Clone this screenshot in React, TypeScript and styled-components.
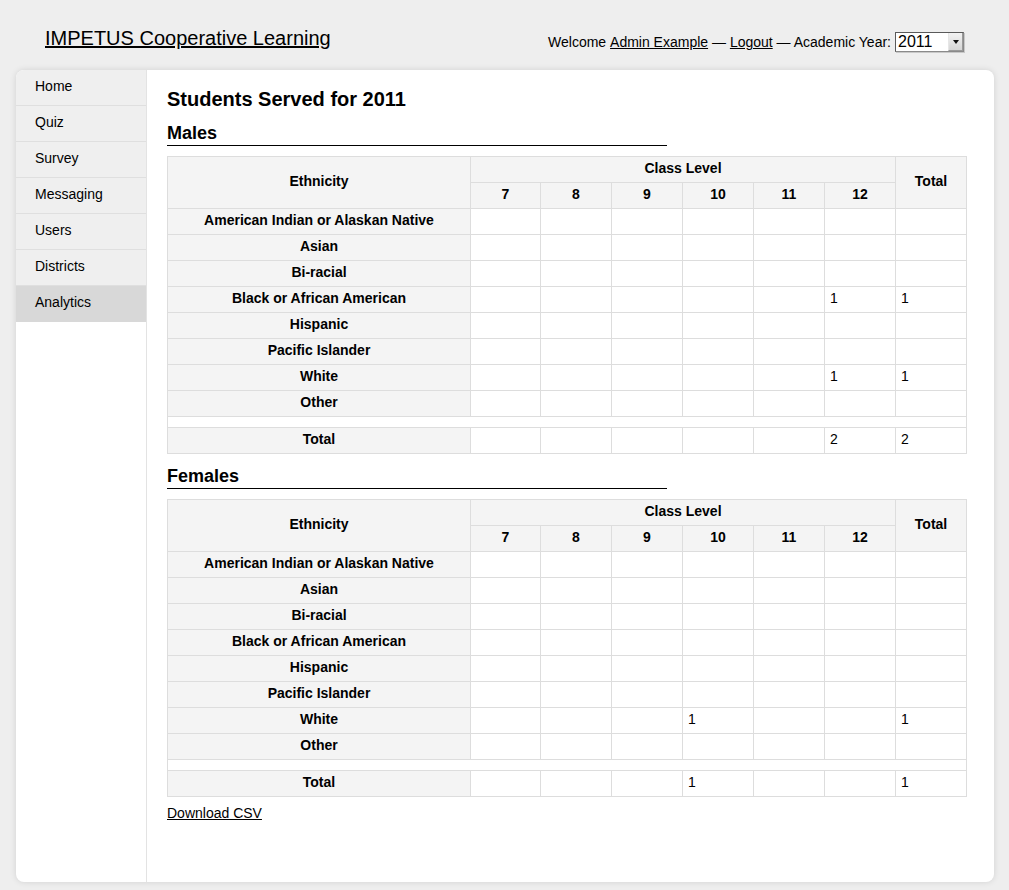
import React from "react";
import styled, { createGlobalStyle } from "styled-components";

const GlobalStyle = createGlobalStyle`
  html, body { margin: 0; padding: 0; background: #eeeeee; }
  body {
    font-family: "Liberation Sans", Arial, Helvetica, sans-serif;
    font-size: 14px;
    color: #000;
  }
`;

const Page = styled.div`
  width: 978px;
  margin: 0 0 0 16px;
  padding-bottom: 8px;
`;

const Header = styled.header`
  height: 70px;
  box-sizing: border-box;
  display: flex;
  justify-content: space-between;
  align-items: flex-start;
  padding: 26px 30px 0 29px;
`;

const SiteTitle = styled.a`
  font-size: 20px;
  line-height: 24px;
  color: #000;
  text-decoration: underline;
`;

const UserBar = styled.div`
  margin-top: 6px;
  height: 20px;
  display: flex;
  align-items: center;
  font-size: 14px;
  line-height: 16px;
  white-space: pre;
`;

const UserLink = styled.a`
  color: #000;
  text-decoration: underline;
`;

const FakeSelect = styled.div`
  margin-left: 4px;
  width: 69px;
  height: 20px;
  box-sizing: border-box;
  border: 1px solid #5a5a5a;
  border-right-color: #8a8a8a;
  border-bottom-color: #8a8a8a;
  background: #fff;
  display: flex;
  align-items: stretch;
  justify-content: space-between;
  box-shadow: 1px 1px 0 #c8c8c8;
`;

const SelectValue = styled.span`
  font-size: 16px;
  line-height: 18px;
  padding-left: 2px;
`;

const SelectArrow = styled.span`
  width: 13px;
  background: linear-gradient(#f2f2f2, #d6d6d6);
  border-left: 1px solid #e6e6e6;
  border-right: 1px solid #9a9a9a;
  border-bottom: 1px solid #9a9a9a;
  display: flex;
  align-items: center;
  justify-content: center;
  &::after {
    content: "";
    width: 0;
    height: 0;
    border-left: 3px solid transparent;
    border-right: 3px solid transparent;
    border-top: 4px solid #111;
  }
`;

const Panel = styled.div`
  display: flex;
  min-height: 812px;
  background: #fff;
  border-radius: 8px;
  box-shadow: 0 0 6px rgba(0, 0, 0, 0.12);
  overflow: hidden;
`;

const Sidebar = styled.nav`
  width: 130px;
  flex-shrink: 0;
  border-right: 1px solid #e3e3e3;
`;

const NavList = styled.ul`
  list-style: none;
  margin: 0;
  padding: 0;
`;

const NavItem = styled.li<{ $active?: boolean }>`
  height: 31px;
  padding: 0 0 4px 19px;
  box-sizing: content-box;
  border-bottom: 1px solid #dfdfdf;
  background: ${(p) => (p.$active ? "#d8d8d8" : "#efefef")};
  display: flex;
  align-items: center;
  font-size: 14px;
  color: #000;
  &:last-child {
    border-bottom: none;
    height: 32px;
  }
`;

const Content = styled.main`
  flex: 1;
  padding: 17px 20px 20px 20px;
`;

const PageTitle = styled.h2`
  margin: 0;
  font-size: 20px;
  line-height: 24px;
  font-weight: bold;
`;

const SectionTitle = styled.h3`
  margin: 11px 0 10px 0;
  width: 500px;
  font-size: 18px;
  line-height: 22px;
  font-weight: bold;
  padding-bottom: 1px;
  border-bottom: 1px solid #000;
`;

const Table = styled.table`
  width: 799px;
  table-layout: fixed;
  border-collapse: collapse;
  font-size: 14px;
`;

const HeadCell = styled.th`
  height: 21px;
  padding: 0 5px 4px 5px;
  border: 1px solid #dddddd;
  background: #f4f4f4;
  font-weight: bold;
  text-align: center;
  vertical-align: middle;
  line-height: 16px;
`;

const DataCell = styled.td`
  height: 21px;
  padding: 0 5px 4px 5px;
  border: 1px solid #dddddd;
  background: #fff;
  text-align: left;
  vertical-align: middle;
  line-height: 16px;
`;

const SpacerCell = styled.td`
  height: 10px;
  padding: 0;
  border: 1px solid #dddddd;
  background: #fff;
`;

const DownloadLink = styled.a`
  display: inline-block;
  margin-top: 8px;
  font-size: 14px;
  line-height: 16px;
  color: #000;
  text-decoration: underline;
`;

const grades = ["7", "8", "9", "10", "11", "12"];
const ethnicities = [
  "American Indian or Alaskan Native",
  "Asian",
  "Bi-racial",
  "Black or African American",
  "Hispanic",
  "Pacific Islander",
  "White",
  "Other",
];

type Counts = Record<string, Record<string, number>>;

const maleCounts: Counts = {
  "Black or African American": { "12": 1 },
  White: { "12": 1 },
};
const femaleCounts: Counts = {
  White: { "10": 1 },
};

function StatsTable({ counts }: { counts: Counts }) {
  const gradeTotals: Record<string, number> = {};
  let grand = 0;
  ethnicities.forEach((e) => {
    grades.forEach((g) => {
      const v = counts[e]?.[g];
      if (v) {
        gradeTotals[g] = (gradeTotals[g] || 0) + v;
        grand += v;
      }
    });
  });
  return (
    <Table>
      <colgroup>
        <col style={{ width: 303 }} />
        {grades.map((g, i) => (
          <col key={g} style={{ width: i === 0 ? 70 : 71 }} />
        ))}
        <col style={{ width: 71 }} />
      </colgroup>
      <thead>
        <tr>
          <HeadCell rowSpan={2}>Ethnicity</HeadCell>
          <HeadCell colSpan={6}>Class Level</HeadCell>
          <HeadCell rowSpan={2}>Total</HeadCell>
        </tr>
        <tr>
          {grades.map((g) => (
            <HeadCell key={g}>{g}</HeadCell>
          ))}
        </tr>
      </thead>
      <tbody>
        {ethnicities.map((e) => {
          const row = counts[e] || {};
          const total = Object.values(row).reduce((a, b) => a + b, 0);
          return (
            <tr key={e}>
              <HeadCell>{e}</HeadCell>
              {grades.map((g) => (
                <DataCell key={g}>{row[g] || ""}</DataCell>
              ))}
              <DataCell>{total || ""}</DataCell>
            </tr>
          );
        })}
        <tr>
          <SpacerCell colSpan={8} />
        </tr>
        <tr>
          <HeadCell>Total</HeadCell>
          {grades.map((g) => (
            <DataCell key={g}>{gradeTotals[g] || ""}</DataCell>
          ))}
          <DataCell>{grand || ""}</DataCell>
        </tr>
      </tbody>
    </Table>
  );
}

const navItems = ["Home", "Quiz", "Survey", "Messaging", "Users", "Districts", "Analytics"];

export default function App() {
  return (
    <>
      <GlobalStyle />
      <Page>
        <Header>
          <SiteTitle href="#">IMPETUS Cooperative Learning</SiteTitle>
          <UserBar>
            Welcome <UserLink href="#">Admin Example</UserLink> — <UserLink href="#">Logout</UserLink> — Academic Year:
            <FakeSelect>
              <SelectValue>2011</SelectValue>
              <SelectArrow />
            </FakeSelect>
          </UserBar>
        </Header>
        <Panel>
          <Sidebar>
            <NavList>
              {navItems.map((n) => (
                <NavItem key={n} $active={n === "Analytics"}>
                  {n}
                </NavItem>
              ))}
            </NavList>
          </Sidebar>
          <Content>
            <PageTitle>Students Served for 2011</PageTitle>
            <SectionTitle>Males</SectionTitle>
            <StatsTable counts={maleCounts} />
            <SectionTitle>Females</SectionTitle>
            <StatsTable counts={femaleCounts} />
            <DownloadLink href="#">Download CSV</DownloadLink>
          </Content>
        </Panel>
      </Page>
    </>
  );
}
